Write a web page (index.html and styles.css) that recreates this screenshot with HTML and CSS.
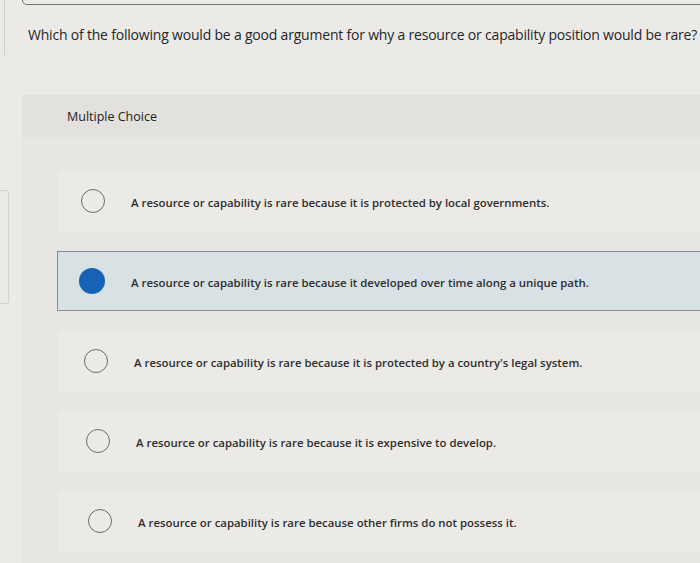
FILE: index.html
```html
<!DOCTYPE html>
<html lang="en">
<head>
<meta charset="utf-8">
<title>Multiple Choice</title>
<link rel="stylesheet" href="styles.css">
</head>
<body>
<div class="page">
  <aside class="rail">
    <div class="rail-top"></div>
    <div class="rail-box"></div>
  </aside>
  <main class="main">
    <div class="topbar"></div>
    <p class="question">Which of the following would be a good argument for why a resource or capability position would be rare?</p>
    <section class="panel">
      <header class="panel-head">Multiple Choice</header>
      <ul class="options">
        <li class="option"><span class="radio"></span><span class="label">A resource or capability is rare because it is protected by local governments.</span></li>
        <li class="option selected"><span class="radio"></span><span class="label">A resource or capability is rare because it developed over time along a unique path.</span></li>
        <li class="option"><span class="radio"></span><span class="label">A resource or capability is rare because it is protected by a country's legal system.</span></li>
        <li class="option"><span class="radio"></span><span class="label">A resource or capability is rare because it is expensive to develop.</span></li>
        <li class="option"><span class="radio"></span><span class="label">A resource or capability is rare because other firms do not possess it.</span></li>
      </ul>
    </section>
  </main>
</div>
</body>
</html>
```

FILE: styles.css
```css
html, body {
  margin: 0;
  padding: 0;
  height: 100%;
  overflow: hidden;
}
body {
  background: #ebeae6;
  font-family: "Open Sans", "Liberation Sans", sans-serif;
  color: #2b2b2b;
}
.page {
  display: flex;
  width: 700px;
  height: 563px;
}
.rail {
  width: 22px;
  flex: none;
  display: flex;
  flex-direction: column;
}
.rail-top {
  margin-left: 4px;
  width: 0;
  height: 55px;
  border-left: 1px solid #cfcdc8;
}
.rail-box {
  margin-top: 135px;
  width: 8px;
  height: 112px;
  border: 1px solid #d4d2cd;
  border-left: none;
  border-radius: 0 3px 3px 0;
}
.main {
  flex: 1;
  min-width: 0;
  display: flex;
  flex-direction: column;
}
.topbar {
  height: 4px;
  margin-right: -20px;
  border: 1.5px solid #6f6f6f;
  border-top: none;
  border-radius: 0 0 0 8px;
}
.question {
  margin: 20px 0 0 6px;
  font-size: 14px;
  line-height: 20px;
  white-space: nowrap;
  color: #262626;
  letter-spacing: -0.2px;
}
.panel {
  margin-top: 50px;
  background: #e7e6e2;
  flex: 1;
  margin-right: -10px;
}
.panel-head {
  height: 42px;
  padding-left: 45px;
  display: flex;
  align-items: center;
  font-size: 12.5px;
  color: #222;
  background: #e2e1dd;
}
.options {
  list-style: none;
  margin: 34px 0 0 0;
  padding: 0;
  display: flex;
  flex-direction: column;
  gap: 20px;
}
.option {
  height: 60px;
  margin-left: 36px;
  padding-left: 22px;
  display: flex;
  align-items: center;
  background: #eceae6;
  border: 1.5px solid transparent;
  box-sizing: border-box;
}
.option:nth-child(3) { padding-left: 25px; }
.option:nth-child(4) { padding-left: 27px; }
.option:nth-child(5) { padding-left: 29px; }
.radio {
  flex: none;
  width: 24px;
  height: 24px;
  border-radius: 50%;
  border: 1.5px solid #6a6a6a;
  box-sizing: border-box;
}
.label {
  margin-left: 26px;
  padding-top: 3px;
  font-size: 11.4px;
  font-weight: 600;
  color: #2e2e2e;
  white-space: nowrap;
}
.option.selected {
  background: #d8e1e4;
  border-color: #878d91;
  border-right: none;
  margin-left: 35px;
  padding-left: 21px;
}
.option.selected .radio {
  width: 26px;
  height: 26px;
  border: none;
  background: #1662b6;
}
.option.selected .label {
  margin-left: 26px;
}
```
